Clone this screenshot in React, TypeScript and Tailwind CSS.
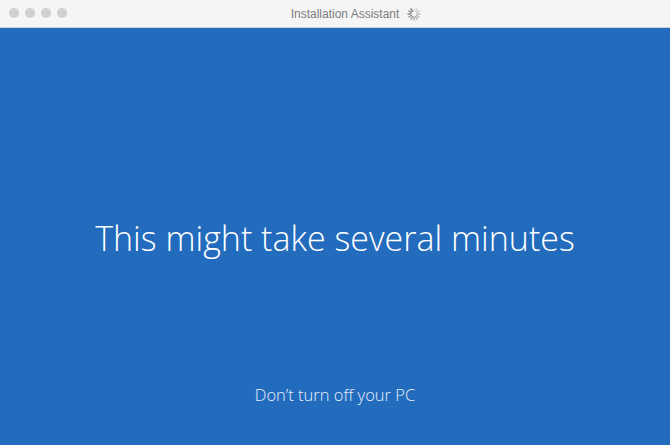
function Spinner() {
  const spokes = Array.from({ length: 12 }, (_, i) => i);
  return (
    <svg width="14" height="14" viewBox="0 0 14 14" className="ml-[8px]">
      {spokes.map((i) => (
        <line
          key={i}
          x1="7"
          y1="1"
          x2="7"
          y2="4"
          stroke="#6b6b6b"
          strokeWidth="1.3"
          strokeLinecap="round"
          opacity={0.2 + (i / 12) * 0.8}
          transform={`rotate(${i * 30} 7 7)`}
        />
      ))}
    </svg>
  );
}

function App() {
  return (
    <div className="w-[670px] h-[445px] flex flex-col overflow-hidden bg-[#236cbd]">
      <div className="h-[28px] shrink-0 relative flex items-center justify-center bg-[#f5f5f5] border-b border-[#cfcfcf]">
        <div className="absolute left-[9px] top-[8px] flex gap-[6px]">
          <span className="w-[10px] h-[10px] rounded-full bg-[#d1d1d1]" />
          <span className="w-[10px] h-[10px] rounded-full bg-[#d1d1d1]" />
          <span className="w-[10px] h-[10px] rounded-full bg-[#d1d1d1]" />
          <span className="w-[10px] h-[10px] rounded-full bg-[#d1d1d1]" />
        </div>
        <div className="flex items-center ml-[42px] text-[12px] text-[#7d7d7d] font-['Liberation_Sans',sans-serif]">
          Installation Assistant
          <Spinner />
        </div>
      </div>
      <div className="flex-1 flex flex-col items-center text-white font-['Open_Sans',sans-serif]">
        <div className="flex-1 flex items-center justify-center pt-[66px]">
          <h1 className="text-[34px] font-light">This might take several minutes</h1>
        </div>
        <p className="text-[16.5px] font-light text-[#e8effa] pb-[37px]">Don’t turn off your PC</p>
      </div>
    </div>
  );
}

export default App;
